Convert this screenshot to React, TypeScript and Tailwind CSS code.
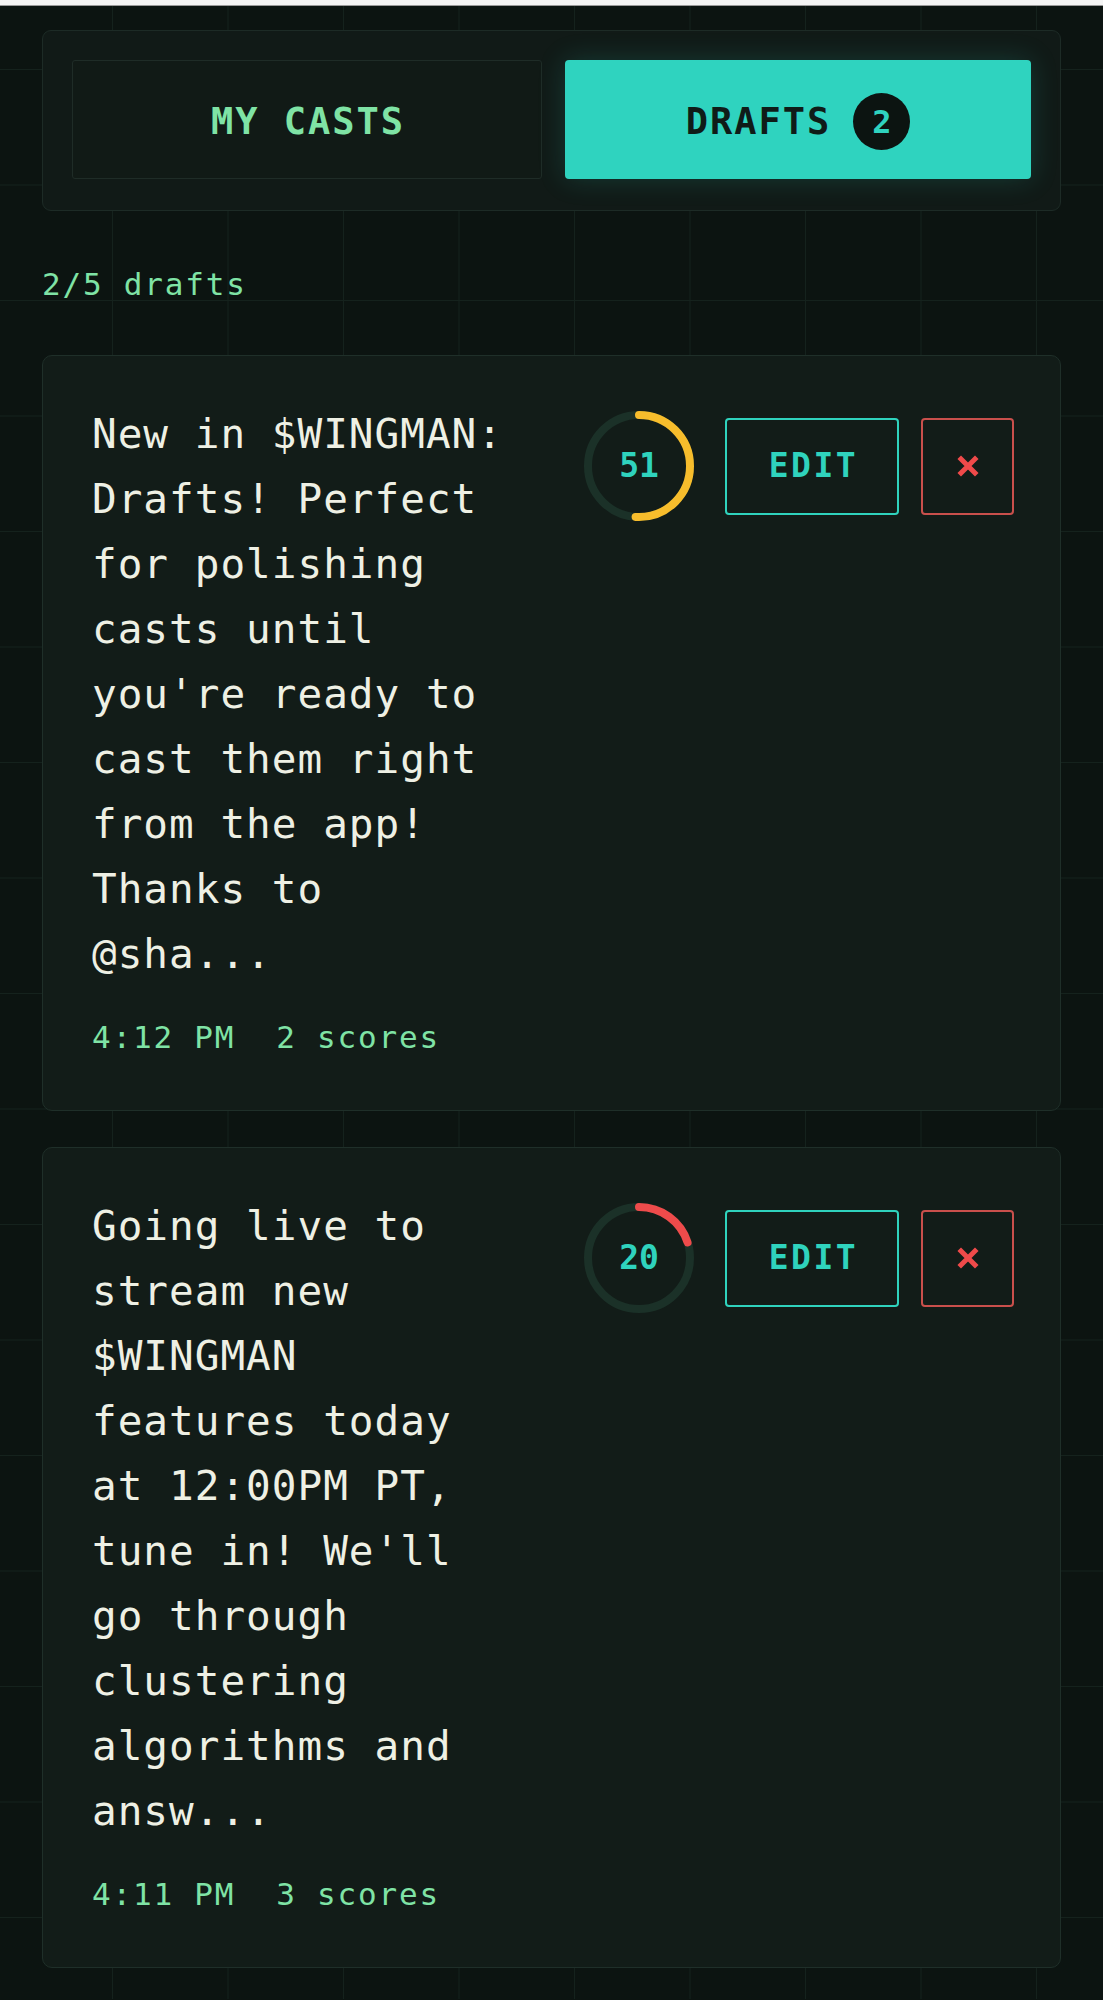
import React from 'react';

const mono = "font-['DejaVu_Sans_Mono','Liberation_Mono',monospace]";

type Draft = {
  text: string;
  score: number;
  color: string;
  time: string;
  scores: number;
};

const drafts: Draft[] = [
  {
    text: "New in $WINGMAN: Drafts! Perfect for polishing casts until you're ready to cast them right from the app! Thanks to @sha...",
    score: 51,
    color: '#f7bd2c',
    time: '4:12 PM',
    scores: 2,
  },
  {
    text: "Going live to stream new $WINGMAN features today at 12:00PM PT, tune in! We'll go through clustering algorithms and answ...",
    score: 20,
    color: '#ee4b4b',
    time: '4:11 PM',
    scores: 3,
  },
];

function ScoreRing({ score, color }: { score: number; color: string }) {
  const r = 51;
  const c = 2 * Math.PI * r;
  return (
    <div className="relative h-[110px] w-[110px] shrink-0">
      <svg width="110" height="110" viewBox="0 0 110 110" className="-rotate-90">
        <circle cx="55" cy="55" r={r} fill="none" stroke="#1b3128" strokeWidth="8" />
        <circle
          cx="55"
          cy="55"
          r={r}
          fill="none"
          stroke={color}
          strokeWidth="8"
          strokeLinecap="round"
          strokeDasharray={`${(c * score) / 100} ${c}`}
        />
      </svg>
      <div className="absolute inset-0 flex items-center justify-center text-[33px] font-bold text-[#2fd3bd]">
        {score}
      </div>
    </div>
  );
}

function DraftCard({ draft }: { draft: Draft }) {
  return (
    <div className="rounded-[10px] border-[1.5px] border-[#1f2f29] bg-[#121c18] pb-[50px] pl-[49px] pr-[46px] pt-[46px]">
      <div className="flex items-start justify-between">
        <p className="w-[424px] text-[41px] leading-[65px] tracking-[1px] text-[#eef0e4]">{draft.text}</p>
        <div className="mt-[9px] flex items-center">
          <ScoreRing score={draft.score} color={draft.color} />
          <button className="ml-[31px] flex h-[97px] w-[174px] items-center justify-center rounded-[4px] border-2 border-[#2fd3bd] pl-[3px] text-[33px] font-bold tracking-[2.5px] text-[#2fd3bd]">
            EDIT
          </button>
          <button className="ml-[22px] flex h-[97px] w-[93px] items-center justify-center rounded-[4px] border-2 border-[#c9504c]">
            <svg width="22" height="22" viewBox="0 0 22 22">
              <path d="M4 4 L18 18 M18 4 L4 18" stroke="#ef4a4a" strokeWidth="5" strokeLinecap="square" />
            </svg>
          </button>
        </div>
      </div>
      <div className="mt-[28px] whitespace-pre text-[31px] leading-[45px] tracking-[1.8px] text-[#7fe3a5]">
        {draft.time}  {draft.scores} scores
      </div>
    </div>
  );
}

export default function App() {
  return (
    <div className={`min-h-screen bg-[#0c1411] ${mono}`}>
      <div className="h-[6px] border-b border-[#9a9a9a] bg-[#f4f4f4]" />
      <div className="min-h-[1993px] bg-[linear-gradient(to_right,#15221d_1px,transparent_1px),linear-gradient(to_bottom,#15221d_1px,transparent_1px)] bg-[size:115.5px_115.5px] bg-[position:112px_63px] px-[42px] pt-[24px]">
        <div className="flex gap-[23px] rounded-[9px] border-[1.5px] border-[#1d2b26] bg-[#111a17] px-[29px] pb-[31px] pt-[29px]">
          <button className="flex h-[119px] flex-1 items-center justify-center rounded-[3px] border-[1.5px] border-[#1f2c27] bg-[#111a16] pl-[2px] pt-[4px] text-[37px] font-bold tracking-[2px] text-[#7fe3a5]">
            MY CASTS
          </button>
          <button className="flex h-[119px] flex-1 items-center justify-center gap-[22px] rounded-[4px] bg-[#2fd3bf] pt-[4px] text-[37px] font-bold tracking-[2px] text-[#0f1c18] shadow-[0_0_28px_rgba(47,211,191,0.18)]">
            <span>DRAFTS</span>
            <span className="flex h-[57px] w-[57px] items-center justify-center rounded-full bg-[#0c1411] text-[32px] tracking-normal text-[#2fd3bf]">
              2
            </span>
          </button>
        </div>

        <div className="mt-[53px] text-[31px] leading-[40px] tracking-[1.8px] text-[#7fe3a5]">2/5 drafts</div>

        <div className="mt-[51px] flex flex-col gap-[36px]">
          {drafts.map((d) => (
            <DraftCard key={d.time} draft={d} />
          ))}
        </div>
      </div>
    </div>
  );
}
